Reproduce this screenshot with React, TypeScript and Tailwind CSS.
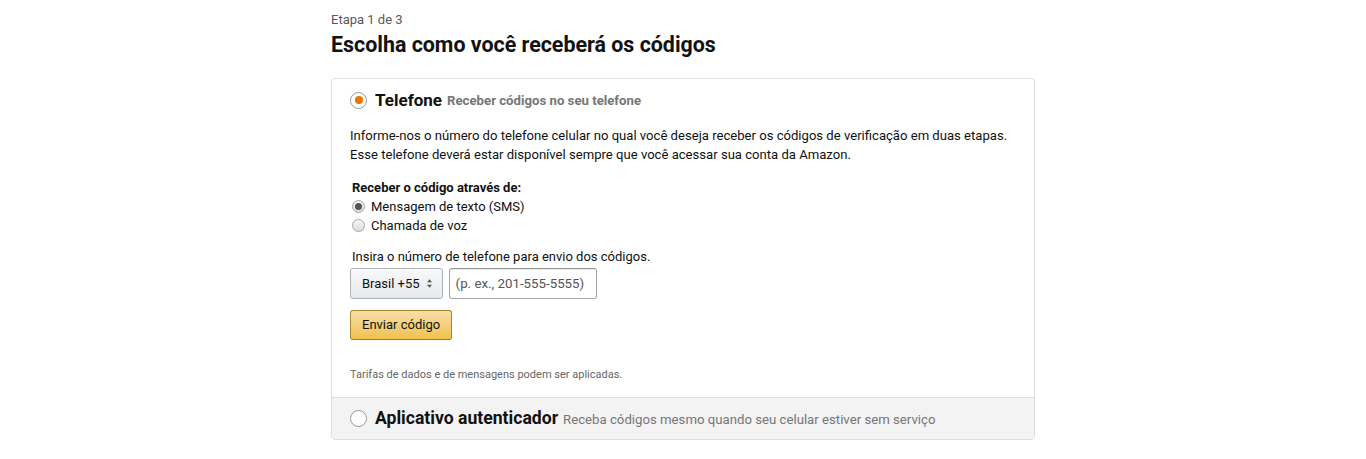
import { useState } from "react";

function Radio({ checked, size = "lg" }: { checked: boolean; size?: "lg" | "sm" }) {
  if (size === "sm") {
    return (
      <span className="w-[13px] h-[13px] rounded-full border border-[#a6a6a6] bg-gradient-to-b from-[#f7f7f7] to-[#dcdcdc] flex items-center justify-center shrink-0">
        {checked && <span className="w-[7px] h-[7px] rounded-full bg-[#555]" />}
      </span>
    );
  }
  return (
    <span className="w-[17px] h-[17px] rounded-full border border-[#999] bg-white flex items-center justify-center shrink-0">
      {checked && <span className="w-[8px] h-[8px] rounded-full bg-[#e77600]" />}
    </span>
  );
}

export default function App() {
  const [metodo, setMetodo] = useState<"telefone" | "app">("telefone");
  const [via, setVia] = useState<"sms" | "voz">("sms");
  const [numero, setNumero] = useState("");

  return (
    <div className="w-full min-h-[459px] bg-white text-[#111] font-['Roboto',sans-serif]">
      <div className="w-[704px] mx-auto pt-[11px]">
        <div className="text-[13px] leading-[17px] text-[#565959]">Etapa 1 de 3</div>
        <h1 className="text-[21.4px] leading-[28px] font-bold mt-[3px]">Escolha como você receberá os códigos</h1>

        <div className="mt-[19px] border border-[#ddd] rounded-[4px] overflow-hidden">
          {/* Telefone */}
          <div className="px-[18px] pt-[10px] pb-[15px] border-b border-[#ddd]">
            <button className="flex items-center gap-[8px]" onClick={() => setMetodo("telefone")}>
              <Radio checked={metodo === "telefone"} />
              <span className="text-[17px] leading-[22px] font-bold">Telefone</span>
              <span className="text-[13.2px] font-bold text-[#767676] -ml-[3px] mt-[2px]">Receber códigos no seu telefone</span>
            </button>

            <p className="mt-[15px] text-[13.1px] leading-[19px]">
              Informe-nos o número do telefone celular no qual você deseja receber os códigos de verificação em duas etapas.
              <br />
              Esse telefone deverá estar disponível sempre que você acessar sua conta da Amazon.
            </p>

            <div className="mt-[14px] pl-[2px]">
              <div className="text-[13px] leading-[19px] font-bold">Receber o código através de:</div>
              <label className="flex items-center gap-[6px] text-[13px] leading-[19px] cursor-pointer" onClick={() => setVia("sms")}>
                <Radio checked={via === "sms"} size="sm" />
                Mensagem de texto (SMS)
              </label>
              <label className="flex items-center gap-[6px] text-[13px] leading-[19px] cursor-pointer" onClick={() => setVia("voz")}>
                <Radio checked={via === "voz"} size="sm" />
                Chamada de voz
              </label>
            </div>

            <div className="mt-[12px] pl-[2px] text-[13px] leading-[19px]">Insira o número de telefone para envio dos códigos.</div>

            <div className="mt-[2px] flex gap-[6px]">
              <button className="h-[31px] pl-[11px] pr-[10px] flex items-center gap-[7px] rounded-[3px] border border-[#adb1b8] bg-gradient-to-b from-[#f7f8fa] to-[#e7e9ec] text-[13px] text-[#111] shadow-[inset_0_1px_0_rgba(255,255,255,0.6)]">
                Brasil +55
                <svg width="5" height="9" viewBox="0 0 6 10" fill="#555">
                  <path d="M3 0 6 3.5H0Z" />
                  <path d="M3 10 6 6.5H0Z" />
                </svg>
              </button>
              <input
                value={numero}
                onChange={(e) => setNumero(e.target.value)}
                placeholder="(p. ex., 201-555-5555)"
                className="h-[31px] w-[148px] px-[6px] rounded-[3px] border border-[#a6a6a6] border-t-[#949494] text-[13.3px] outline-none placeholder:text-[#555] shadow-[inset_0_1px_0_rgba(0,0,0,0.07)]"
              />
            </div>

            <button className="mt-[11px] h-[30px] px-[11px] rounded-[3px] border border-[#a88734] border-b-[#9c7e31] bg-gradient-to-b from-[#f7dfa5] to-[#f0c14b] text-[13px] text-[#111]">
              Enviar código
            </button>

            <div className="mt-[27px] text-[11px] leading-[15px] text-[#666]">Tarifas de dados e de mensagens podem ser aplicadas.</div>
          </div>

          {/* Aplicativo */}
          <button
            className="w-full bg-[#f3f3f3] px-[18px] h-[41px] flex items-center gap-[8px]"
            onClick={() => setMetodo("app")}
          >
            <Radio checked={metodo === "app"} />
            <span className="text-[17.6px] font-bold">Aplicativo autenticador</span>
            <span className="text-[13.2px] text-[#767676] -ml-[3px] mt-[2px]">Receba códigos mesmo quando seu celular estiver sem serviço</span>
          </button>
        </div>
      </div>
    </div>
  );
}
